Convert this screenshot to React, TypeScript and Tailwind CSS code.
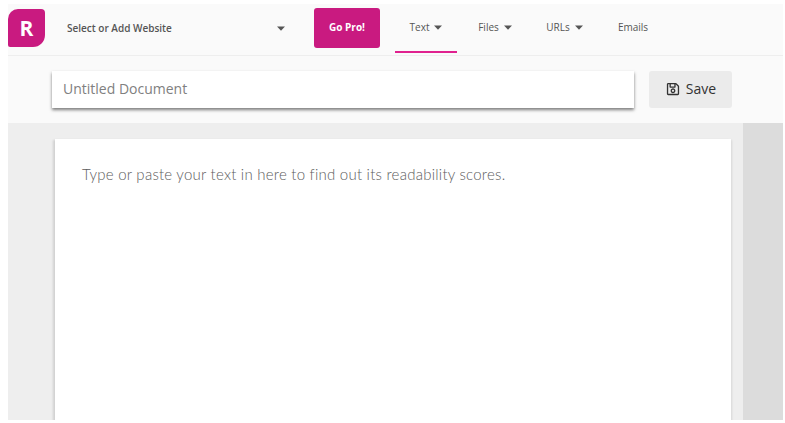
import { FaRegSave } from "react-icons/fa";

function Caret({ className = "" }: { className?: string }) {
  return (
    <svg width="8" height="5" viewBox="0 0 8 5" className={className}>
      <path d="M0 0.5h8L4 4.8z" fill="#555555" />
    </svg>
  );
}

function NavTab({ label, caret, active, width }: { label: string; caret?: boolean; active?: boolean; width: string }) {
  return (
    <div
      className={`flex h-[49px] items-center justify-center gap-[5px] border-b-2 text-[10px] font-medium text-[#555555] ${width} ${
        active ? "border-[#e0218f]" : "border-transparent"
      }`}
    >
      <span>{label}</span>
      {caret && <Caret />}
    </div>
  );
}

export default function App() {
  return (
    <div className="h-[423px] w-[785px] overflow-hidden bg-white pb-[3px] pl-2 pr-[2px] pt-1 font-['Open_Sans',sans-serif]">
      <div className="flex h-full flex-col overflow-hidden bg-[#fafafa]">
        <header className="flex h-[52px] shrink-0 items-start border-b border-[#eeeeee]">
          <div className="mt-[5px] flex h-[38px] w-[37px] items-center justify-center rounded-tl-[10px] rounded-tr-[4px] rounded-br-[12px] rounded-bl-[2px] bg-[#c91a80] text-[21px] font-bold leading-none text-white">
            R
          </div>
          <div className="ml-[22px] mt-[4px] flex h-[40px] w-[218px] items-center justify-between text-[10px] font-semibold text-[#555555]">
            <span>Select or Add Website</span>
            <Caret />
          </div>
          <button className="ml-[29px] mt-[4px] h-[40px] w-[66px] rounded-[3px] bg-[#c91a80] pb-[1px] text-[10px] font-bold text-white">
            Go Pro!
          </button>
          <nav className="ml-[15px] flex">
            <NavTab label="Text" caret active width="w-[62px]" />
            <NavTab label="Files" caret width="w-[76px]" />
            <NavTab label="URLs" caret width="w-[63px]" />
            <NavTab label="Emails" width="w-[74px]" />
          </nav>
        </header>

        <div className="flex h-[67px] shrink-0 items-start pl-[44px] pt-[15px]">
          <div className="flex h-[37px] w-[582px] items-center bg-white pb-[2px] pl-[11px] text-[14px] text-[#808080] shadow-[0_2px_3px_rgba(0,0,0,0.5)]">
            Untitled Document
          </div>
          <button className="ml-[15px] flex h-[37px] w-[83px] items-center justify-center gap-[6px] rounded-[3px] bg-[#ebebeb] pb-[2px] pl-[1px] text-[14px] text-[#333333]">
            <FaRegSave size={14} />
            Save
          </button>
        </div>

        <div className="flex min-h-0 flex-1 bg-[#eeeeee]">
          <div className="ml-[47px] mt-4 h-full w-[676px] bg-white pl-[27px] pt-[24px] font-['Lato',sans-serif] text-[15px] font-light tracking-[0.24px] text-[#5c5c5c] shadow-[-2px_1px_2px_rgba(0,0,0,0.12),1px_1px_2px_rgba(0,0,0,0.1)]">
            Type or paste your text in here to find out its readability scores.
          </div>
          <div className="ml-auto w-[40px] bg-[#dcdcdc]" />
        </div>
      </div>
    </div>
  );
}
